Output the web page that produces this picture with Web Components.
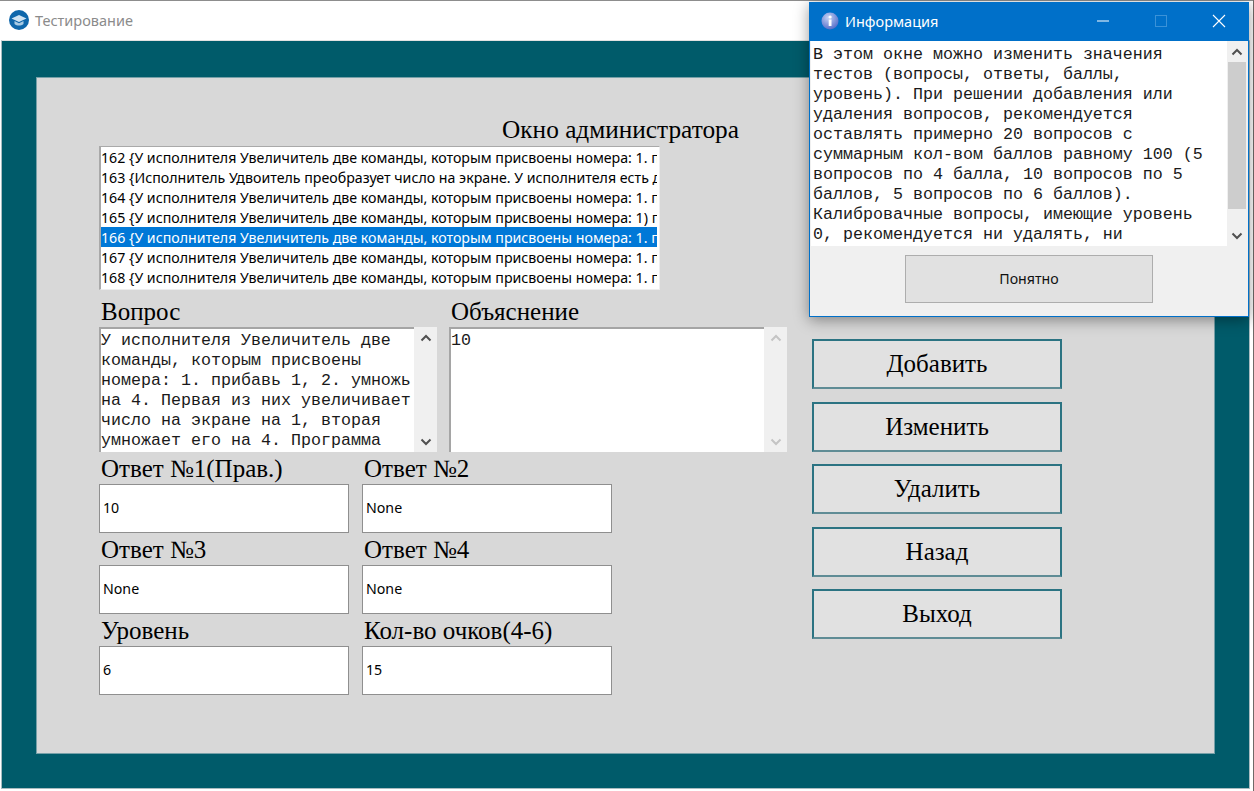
<!DOCTYPE html>
<html lang="ru">
<head>
<meta charset="utf-8">
<title>Тестирование</title>
<style>
  html, body { margin: 0; padding: 0; background: #fff; overflow: hidden; }
</style>
</head>
<body>
<test-app>
  <info-dialog slot="dialog" caption="Информация" action="Понятно">В этом окне можно изменить значения
тестов (вопросы, ответы, баллы,
уровень). При решении добавления или
удаления вопросов, рекомендуется
оставлять примерно 20 вопросов с
суммарным кол-вом баллов равному 100 (5
вопросов по 4 балла, 10 вопросов по 5
баллов, 5 вопросов по 6 баллов).
Калибровачные вопросы, имеющие уровень
0, рекомендуется ни удалять, ни</info-dialog>
  <admin-form>
    <question-list slot="list" selected="166">
      <div>162 {У исполнителя Увеличитель две команды, которым присвоены номера: 1. прибавь 1, 2. умножь на 4</div>
      <div>163 {Исполнитель Удвоитель преобразует число на экране. У исполнителя есть две команды</div>
      <div>164 {У исполнителя Увеличитель две команды, которым присвоены номера: 1. прибавь 1, 2. умножь на 4</div>
      <div>165 {У исполнителя Увеличитель две команды, которым присвоены номера: 1) прибавь 1, 2) умножь на 4</div>
      <div class="on">166 {У исполнителя Увеличитель две команды, которым присвоены номера: 1. прибавь 1, 2. умножь на 4</div>
      <div>167 {У исполнителя Увеличитель две команды, которым присвоены номера: 1. прибавь 1, 2. умножь на 4</div>
      <div>168 {У исполнителя Увеличитель две команды, которым присвоены номера: 1. прибавь 1, 2. умножь на 4</div>
    </question-list>
    <text-box slot="question" label="Вопрос" thumb>У исполнителя Увеличитель две
команды, которым присвоены
номера: 1. прибавь 1, 2. умножь
на 4. Первая из них увеличивает
число на экране на 1, вторая
умножает его на 4. Программа</text-box>
    <text-box slot="explain" label="Объяснение" disabled>10</text-box>
    <answer-field slot="fields" label="Ответ №1(Прав.)" value="10"></answer-field>
    <answer-field slot="fields" label="Ответ №2" value="None"></answer-field>
    <answer-field slot="fields" label="Ответ №3" value="None"></answer-field>
    <answer-field slot="fields" label="Ответ №4" value="None"></answer-field>
    <answer-field slot="fields" label="Уровень" value="6"></answer-field>
    <answer-field slot="fields" label="Кол-во очков(4-6)" value="15"></answer-field>
    <action-button slot="actions">Добавить</action-button>
    <action-button slot="actions">Изменить</action-button>
    <action-button slot="actions">Удалить</action-button>
    <action-button slot="actions">Назад</action-button>
    <action-button slot="actions">Выход</action-button>
  </admin-form>
</test-app>

<script>
const SERIF = `"Liberation Serif", "Times New Roman", serif`;
const MONO = `"Liberation Mono", "Courier New", monospace`;
const UI = `"Noto Sans", "Open Sans", sans-serif`;

const CHEVRON_UP = `<svg width="12" height="8" viewBox="0 0 12 8"><path d="M1.5 6.5 6 2l4.5 4.500" fill="none" stroke="currentColor" stroke-width="2"/></svg>`;
const CHEVRON_DOWN = `<svg width="12" height="8" viewBox="0 0 12 8"><path d="M1.5 1.5 6 6l4.5-4.500" fill="none" stroke="currentColor" stroke-width="2"/></svg>`;

class TestApp extends HTMLElement {
  constructor() {
    super();
    this.root = this.attachShadow({ mode: 'open' });
    this.root.innerHTML = `
      <style>
        :host { display: flex; flex-direction: column; position: relative; width: 1254px; height: 791px; overflow: hidden; background: #fff; }
        .strip { height: 1px; background: #8d8d8d; flex: none; }
        .title { height: 39px; box-sizing: border-box; padding-bottom: 1px; flex: none; display: flex; align-items: center; gap: 6px; padding-left: 9px; font: 14.5px ${UI}; color: #8b8b8b; }
        .frame { flex: none; height: 749px; margin-left: 1px; width: 1249px; box-sizing: border-box; border: 1px solid #a9bcc0; border-top: 1px solid #e2e2e2; background: #005b6a; padding: 36px 34px 34px 34px; }
        .panel { box-sizing: border-box; height: 677px; background: #d8d8d8; border: 1px solid #76a0a8; }
        .edge { position: absolute; right: 0; top: 0; width: 1px; height: 100%; background: #6f6a68; }
      </style>
      <div class="strip"></div>
      <div class="title">
        <svg width="20" height="20" viewBox="0 0 20 20">
          <circle cx="10" cy="10" r="10" fill="#0f67ab"/>
          <path d="M2.5 8.5 10 5l7.5 3.5L10 12z" fill="#cfe3f2"/>
          <path d="M5.5 11v3c2.500 2 6.500 2 9 0v-3L10 13.300z" fill="#a9cbe4"/>
        </svg>
        <span>Тестирование</span>
      </div>
      <div class="frame"><div class="panel"><slot></slot></div></div>
      <div class="edge"></div>
      <slot name="dialog"></slot>
    `;
  }
}

class AdminForm extends HTMLElement {
  constructor() {
    super();
    this.root = this.attachShadow({ mode: 'open' });
    this.root.innerHTML = `
      <style>
        :host { display: block; box-sizing: border-box; height: 100%; padding: 37px 72px 0 62px; font-family: ${SERIF}; color: #000; }
        h1 { margin: 0; font: 400 25.300px/29px ${SERIF}; text-align: center; height: 31px; }
        .body { display: flex; gap: 25px; }
        .left { flex: none; width: 688px; }
        .texts { display: flex; gap: 12px; margin-top: 8px; }
        .fields { display: grid; grid-template-columns: 250px 250px; column-gap: 13px; row-gap: 3px; margin-top: 3px; }
        .actions { display: flex; flex-direction: column; gap: 12.500px; padding-top: 49px; width: 250px; }
      </style>
      <h1>Окно администратора</h1>
      <slot name="list"></slot>
      <div class="body">
        <div class="left">
          <div class="texts"><slot name="question"></slot><slot name="explain"></slot></div>
          <div class="fields"><slot name="fields"></slot></div>
        </div>
        <div class="actions"><slot name="actions"></slot></div>
      </div>
    `;
  }
}

class QuestionList extends HTMLElement {
  constructor() {
    super();
    this.root = this.attachShadow({ mode: 'open' });
    this.root.innerHTML = `
      <style>
        :host { display: block; box-sizing: border-box; width: 561px; height: 144px; background: #fff; border: 1px solid #eeeeee; border-top: 1px solid #a9a9a9; border-left: 2px solid #a9a9a9; padding-right: 2px; overflow: hidden; font: 14.200px/22px ${UI}; color: #000; }
        ::slotted(div) { white-space: nowrap; overflow: hidden; height: 20px; }
        ::slotted(.on) { background: #0078d7; color: #fff; }
      </style>
      <slot></slot>
    `;
  }
}

class ScrollBar extends HTMLElement {
  constructor() {
    super();
    this.root = this.attachShadow({ mode: 'open' });
    this.root.innerHTML = `
      <style>
        :host { display: flex; flex-direction: column; align-items: center; flex: none; width: var(--bar-width, 20px); background: #f0f0f0; color: #505050; }
        :host([disabled]) { color: #c4c4c4; }
        .arrow { height: 21px; flex: none; display: flex; align-items: center; justify-content: center; }
        .track { flex: 1; width: 100%; min-height: 0; }
        .thumb { background: #cdcdcd; margin: 0 1px; }
      </style>
      <div class="arrow">${CHEVRON_UP}</div>
      <div class="track"><div class="thumb"></div></div>
      <div class="arrow">${CHEVRON_DOWN}</div>
    `;
  }

  connectedCallback() {
    const thumb = this.root.querySelector('.thumb');
    thumb.style.height = (this.getAttribute('thumb') || 0) + 'px';
  }
}

class TextBox extends HTMLElement {
  constructor() {
    super();
    this.root = this.attachShadow({ mode: 'open' });
    this.root.innerHTML = `
      <style>
        :host { display: block; width: 338px; }
        .label { font: 25px/27px ${SERIF}; padding-left: 2px; height: 29px; }
        .box { display: flex; height: 125px; box-sizing: border-box; background: #fff; border-top: 2px solid #a5a5a5; border-left: 2px solid #a5a5a5; }
        .text { flex: 1; min-width: 0; overflow: hidden; white-space: pre; font: 16.670px/20px ${MONO}; color: #1a1a1a; padding-top: 2px; }
        scroll-bar { --bar-width: 23px; margin-top: -2px; }
      </style>
      <div class="label"></div>
      <div class="box"><div class="text"><slot></slot></div><scroll-bar></scroll-bar></div>
    `;
  }

  connectedCallback() {
    this.root.querySelector('.label').textContent = this.getAttribute('label');
    const bar = this.root.querySelector('scroll-bar');
    if (this.hasAttribute('thumb')) bar.setAttribute('thumb', '50');
    if (this.hasAttribute('disabled')) bar.setAttribute('disabled', '');
  }
}

class AnswerField extends HTMLElement {
  constructor() {
    super();
    this.root = this.attachShadow({ mode: 'open' });
    this.root.innerHTML = `
      <style>
        :host { display: block; }
        .label { font: 25px/27px ${SERIF}; padding-left: 2px; height: 29px; }
        .input { box-sizing: border-box; height: 49px; background: #fff; border: 1px solid #8f8f8f; display: flex; align-items: center; padding: 0 0 3px 3px; font: 14.200px ${UI}; color: #000; }
      </style>
      <div class="label"></div>
      <div class="input"></div>
    `;
  }

  connectedCallback() {
    this.root.querySelector('.label').textContent = this.getAttribute('label');
    this.root.querySelector('.input').textContent = this.getAttribute('value');
  }
}

class ActionButton extends HTMLElement {
  constructor() {
    super();
    this.root = this.attachShadow({ mode: 'open' });
    this.root.innerHTML = `
      <style>
        :host { display: flex; align-items: center; justify-content: center; box-sizing: border-box; height: 50px; background: #e1e1e1; border: 2px solid #2b7382; border-bottom-color: #5f8c95; font: 25px ${SERIF}; color: #000; }
      </style>
      <slot></slot>
    `;
  }
}

class InfoDialog extends HTMLElement {
  constructor() {
    super();
    this.root = this.attachShadow({ mode: 'open' });
    this.root.innerHTML = `
      <style>
        :host { position: absolute; left: 809px; top: 2px; width: 440px; height: 315px; box-sizing: border-box; display: flex; flex-direction: column; background: #f0f0f0; border: 1px solid #0070c9; border-top: 0; box-shadow: 0 3px 14px rgba(0,0,0,.4); }
        .bar { height: 39px; box-sizing: border-box; padding-bottom: 1px; flex: none; background: #0070c9; color: #fff; display: flex; align-items: center; padding-left: 11px; font: 14.500px ${UI}; }
        .name { flex: 1; margin-left: 6px; }
        .ctl { width: 58px; height: 38px; display: flex; align-items: center; justify-content: center; flex: none; }
        .box { display: flex; height: 205px; flex: none; margin-left: 1px; }
        .text { flex: 1; min-width: 0; background: #fff; overflow: hidden; white-space: pre; font: 16.670px/20px ${MONO}; color: #1a1a1a; padding: 4px 0 0 2px; box-sizing: border-box; }
        scroll-bar { --bar-width: 20px; margin-right: 1px; }
        .foot { flex: 1; display: flex; justify-content: center; padding-top: 9px; }
        .ok { width: 248px; height: 48px; box-sizing: border-box; padding-bottom: 2px; background: #e1e1e1; border: 1px solid #adadad; display: flex; align-items: center; justify-content: center; font: 14.200px ${UI}; color: #111; }
      </style>
      <div class="bar">
        <svg width="18" height="18" viewBox="0 0 18 18">
          <defs><radialGradient id="g" cx=".4" cy=".3" r=".8"><stop offset="0" stop-color="#c3d2f5"/><stop offset="1" stop-color="#4a62c4"/></radialGradient></defs>
          <circle cx="9" cy="9" r="8.500" fill="url(#g)"/>
          <rect x="7.700" y="7.500" width="2.800" height="6.500" fill="#fff"/>
          <circle cx="9.100" cy="5" r="1.600" fill="#fff"/>
        </svg>
        <span class="name"></span>
        <span class="ctl"><svg width="14" height="14" viewBox="0 0 14 14"><path d="M1 7h12" stroke="#fff" stroke-width="1"/></svg></span>
        <span class="ctl"><svg width="14" height="14" viewBox="0 0 14 14"><rect x="1.500" y="1.500" width="11" height="11" fill="none" stroke="#3a92d8"/></svg></span>
        <span class="ctl"><svg width="14" height="14" viewBox="0 0 14 14"><path d="M1 1l12 12M13 1 1 13" stroke="#fff" stroke-width="1.100"/></svg></span>
      </div>
      <div class="box"><div class="text"><slot></slot></div><scroll-bar thumb="147"></scroll-bar></div>
      <div class="foot"><div class="ok"></div></div>
    `;
  }

  connectedCallback() {
    this.root.querySelector('.name').textContent = this.getAttribute('caption');
    this.root.querySelector('.ok').textContent = this.getAttribute('action');
  }
}

customElements.define('scroll-bar', ScrollBar);
customElements.define('test-app', TestApp);
customElements.define('admin-form', AdminForm);
customElements.define('question-list', QuestionList);
customElements.define('text-box', TextBox);
customElements.define('answer-field', AnswerField);
customElements.define('action-button', ActionButton);
customElements.define('info-dialog', InfoDialog);
</script>
</body>
</html>
